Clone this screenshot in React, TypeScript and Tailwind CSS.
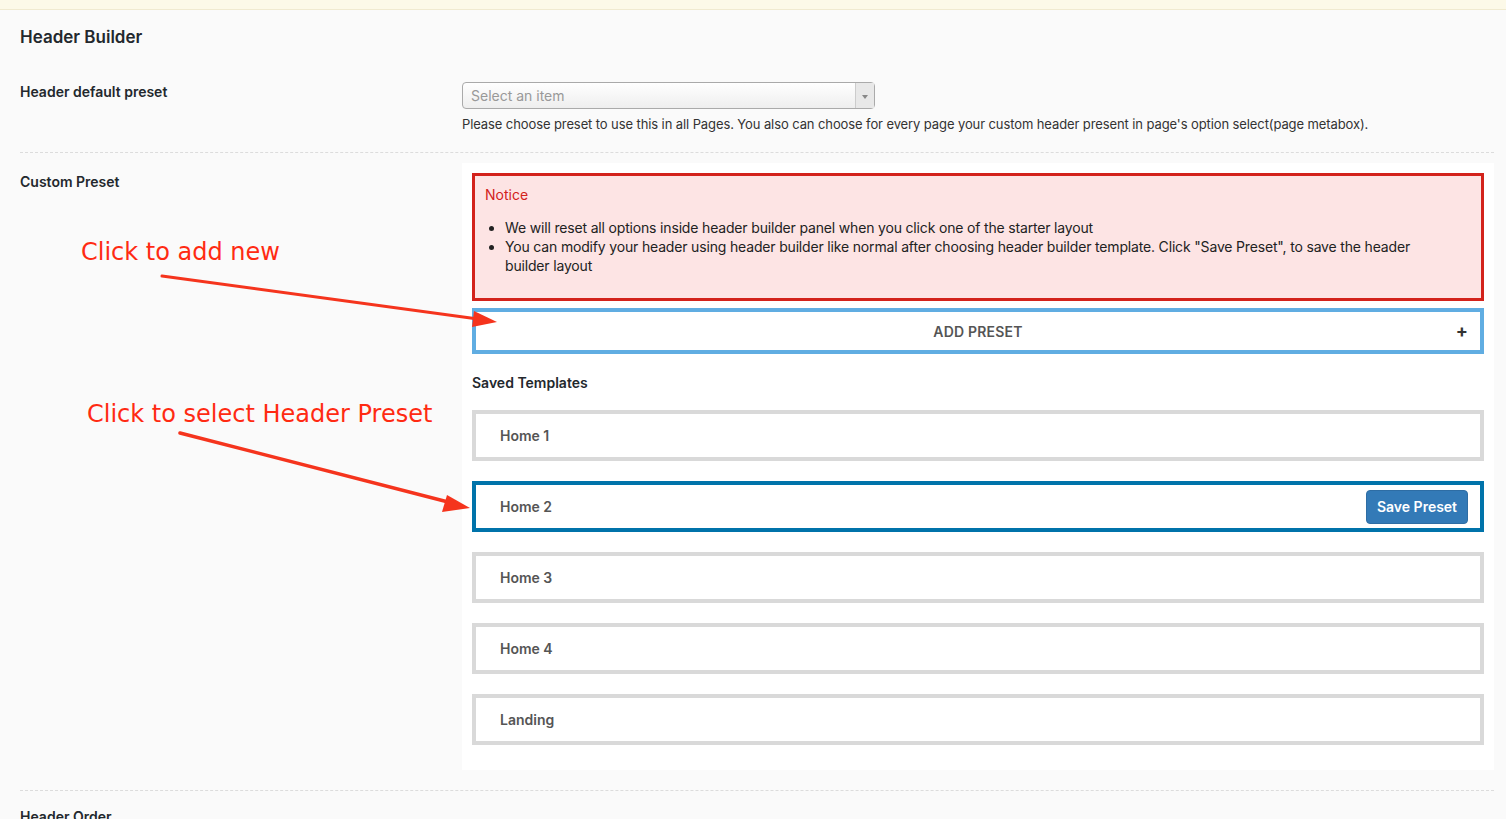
export default function App() {
  const presets = ["Home 1", "Home 2", "Home 3", "Home 4", "Landing"];

  return (
    <div className="relative min-h-[819px] w-full overflow-hidden bg-[#fafafa] font-['Inter','Liberation_Sans',sans-serif] text-[#23282d]">
      <div className="h-[10px] border-b border-[#f0ead0] bg-[#fcf9e8]" />

      <div className="pl-5 pr-3">
        <h2 className="pt-[16px] text-[17px] font-semibold leading-[22px] text-[#23282d]">
          Header Builder
        </h2>

        <div className="mt-[34px] flex border-b border-dashed border-[#dcdcdc] pb-[19px]">
          <div className="w-[442px] pt-[1px] text-[14px] font-semibold leading-[18px]">
            Header default preset
          </div>
          <div className="flex-1">
            <div className="flex h-[27px] w-[413px] items-center rounded-[4px] border border-[#aaaaaa] bg-gradient-to-b from-white to-[#eeeeee]">
              <span className="flex-1 pl-2 text-[14px] text-[#999999]">Select an item</span>
              <span className="flex h-full w-[19px] items-center justify-center border-l border-[#cccccc] bg-[#e8e8e8]">
                <span className="mt-[2px] h-0 w-0 border-x-[3px] border-t-[4px] border-x-transparent border-t-[#888888]" />
              </span>
            </div>
            <p className="mt-[6px] text-[13px] leading-[18px] tracking-[-0.1px] text-[#333333]">
              Please choose preset to use this in all Pages. You also can choose for every page your custom header present in page's option select(page metabox).
            </p>
          </div>
        </div>

        <div className="flex border-b border-dashed border-[#dcdcdc] pb-[20px] pt-[10px]">
          <div className="w-[442px] pt-[10px] text-[14px] font-semibold leading-[18px]">Custom Preset</div>
          <div className="flex-1 bg-white px-[10px] pb-[25px] pt-[10px]">
            <div className="border-[3px] border-[#d3221b] bg-[#fde4e4] px-[10px] pb-[23px] pt-[10px]">
              <div className="text-[14px] leading-[18px] text-[#d3221b]">Notice</div>
              <ul className="mt-[14px] list-disc pl-[20px] pr-[40px] text-[14px] leading-[19px] tracking-[-0.17px] text-[#222222]">
                <li>We will reset all options inside header builder panel when you click one of the starter layout</li>
                <li>
                  You can modify your header using header builder like normal after choosing header builder template. Click "Save Preset", to save the header builder layout
                </li>
              </ul>
            </div>

            <div className="relative mt-[7px] flex h-[46px] items-center justify-center border-4 border-[#60ade2] bg-white">
              <span className="text-[14px] font-semibold tracking-[0.2px] text-[#555555]">ADD PRESET</span>
              <span className="absolute right-[12px] top-1/2 -translate-y-1/2 text-[18px] font-bold leading-none text-[#333333]">+</span>
            </div>

            <div className="mt-[20px] text-[14px] font-semibold leading-[18px] text-[#23282d]">Saved Templates</div>

            <div className="mt-[18px] flex flex-col gap-[20px]">
              {presets.map((p) => {
                const active = p === "Home 2";
                return (
                  <div
                    key={p}
                    className={
                      active
                        ? "flex h-[51px] items-center justify-between border-4 border-[#0073aa] bg-white pl-[24px] pr-[12px]"
                        : "flex h-[51px] items-center justify-between border-4 border-[#d9d9d9] bg-white pl-[24px] pr-[12px]"
                    }
                  >
                    <span className="text-[14px] font-semibold text-[#555555]">{p}</span>
                    {active && (
                      <button className="h-[34px] w-[102px] rounded-[4px] border border-[#2e6da4] bg-[#337ab7] text-[14px] font-semibold text-white">
                        Save Preset
                      </button>
                    )}
                  </div>
                );
              })}
            </div>
          </div>
        </div>

        <h3 className="pt-[17px] text-[14px] font-semibold leading-[18px]">Header Order</h3>
      </div>

      {/* annotations */}
      <div className="absolute left-[81px] top-[237px] font-['DejaVu_Sans',sans-serif] text-[24px] leading-[30px] text-[#ff2a12]">
        Click to add new
      </div>
      <div className="absolute left-[87px] top-[399px] font-['DejaVu_Sans',sans-serif] text-[24px] leading-[30px] text-[#ff2a12]">
        Click to select Header Preset
      </div>
      <svg className="pointer-events-none absolute left-0 top-0" width="1506" height="819">
        <line x1="162" y1="276" x2="478" y2="319" stroke="#f5341d" strokeWidth="3" strokeLinecap="round" />
        <polygon points="497,322 474,311 472,327" fill="#f5341d" />
        <line x1="180" y1="433" x2="452" y2="503" stroke="#f5341d" strokeWidth="3.5" strokeLinecap="round" />
        <polygon points="470,508 447,495 442,512" fill="#f5341d" />
      </svg>
    </div>
  );
}
